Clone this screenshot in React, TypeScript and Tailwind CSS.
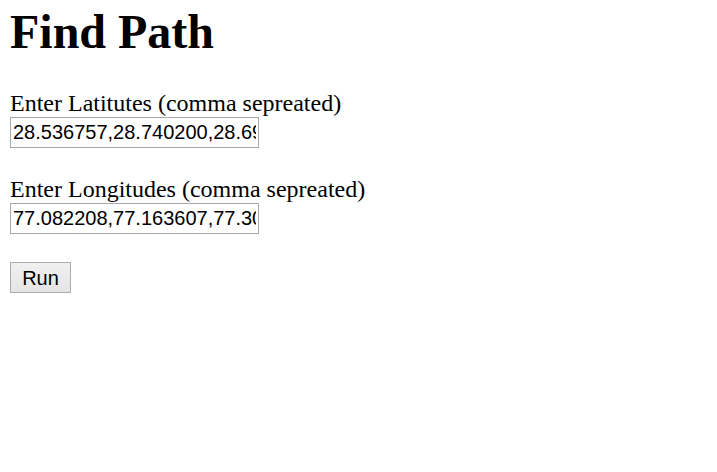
export default function App() {
  const inputCls =
    "block h-[31px] w-[249px] border border-[#a9a9a9] px-[2px] font-['Liberation_Sans',Arial,sans-serif] text-[20px] text-black outline-none";

  return (
    <div className="min-h-screen bg-white px-[10px] pt-[5px] font-['Liberation_Serif','Times_New_Roman',serif] text-black">
      <h1 className="text-[48px] font-bold leading-[53px]">Find Path</h1>

      {/* latitudes */}
      <div className="mt-[32px] text-[24px] leading-[27px]">Enter Latitutes (comma sepreated)</div>
      <input type="text" defaultValue="28.536757,28.740200,28.695,28.6" className={inputCls} />

      {/* longitudes */}
      <div className="mt-[28px] text-[24px] leading-[27px]">Enter Longitudes (comma sepreated)</div>
      <input type="text" defaultValue="77.082208,77.163607,77.30,77.2" className={inputCls} />

      <button
        type="button"
        className="mt-[28px] block h-[31px] w-[61px] border border-[#acacac] bg-gradient-to-b from-[#f0f0f0] to-[#e5e5e5] font-['Liberation_Sans',Arial,sans-serif] text-[20px] leading-none text-black"
      >
        Run
      </button>
    </div>
  );
}
